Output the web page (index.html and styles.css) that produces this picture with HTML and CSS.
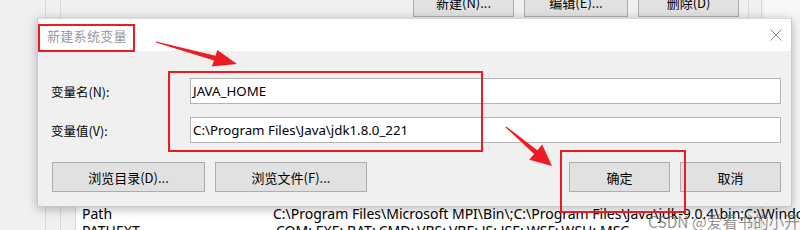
FILE: index.html
```html
<!DOCTYPE html>
<html lang="zh-CN">
<head>
<meta charset="utf-8">
<title>新建系统变量</title>
<link rel="stylesheet" href="styles.css">
</head>
<body>
<div class="screen">
  <div class="backwin">
    <div class="pane">
      <div class="toolbar">
        <div class="tbtn w1">新建(N)...</div>
        <div class="tbtn w2">编辑(E)...</div>
        <div class="tbtn w3">删除(D)</div>
      </div>
      <div class="list">
        <div class="lrow"><span class="lname">Path</span><span class="lval">C:\Program Files\Microsoft MPI\Bin\;C:\Program Files\Java\jdk-9.0.4\bin;C:\Windows</span></div>
        <div class="lrow"><span class="lname">PATHEXT</span><span class="lval">.COM;.EXE;.BAT;.CMD;.VBS;.VBE;.JS;.JSE;.WSF;.WSH;.MSC</span></div>
      </div>
    </div>
  </div>

  <div class="dialog">
    <div class="titlebar">
      <span class="title">新建系统变量</span>
      <svg class="close" width="12" height="12" viewBox="0 0 12 12"><path d="M0.5 0.5 L11.5 11.5 M11.5 0.5 L0.5 11.5" stroke="#8c8c8c" stroke-width="1" fill="none"/></svg>
    </div>
    <div class="body">
      <div class="field">
        <label class="flabel">变量名(N):</label>
        <div class="input">JAVA_HOME</div>
      </div>
      <div class="field">
        <label class="flabel">变量值(V):</label>
        <div class="input">C:\Program Files\Java\jdk1.8.0_221</div>
      </div>
      <div class="buttons">
        <div class="btn wide1">浏览目录(D)...</div>
        <div class="btn wide2">浏览文件(F)...</div>
        <div class="spacer"></div>
        <div class="btn">确定</div>
        <div class="btn">取消</div>
      </div>
    </div>
  </div>

  <div class="watermark">CSDN @爱看书的小开始</div>

  <div class="redbox rb1"></div>
  <div class="redbox rb2"></div>
  <div class="redbox rb3"></div>
  <svg class="arrows" width="800" height="230" viewBox="0 0 800 230">
    <polygon fill="#ed1c24" points="155.9,42.6 214.1,60.6 211.7,66.4 237,64 217.4,50 215.5,55.8 156.1,41.4"/>
    <polygon fill="#ed1c24" points="505.6,127.4 534.1,154 529.2,159.8 552,166 542.2,144.4 537.3,150.2 506.4,126.6"/>
  </svg>
</div>
</body>
</html>
```
FILE: styles.css
```css
html, body {
  margin: 0;
  padding: 0;
}
body {
  background: #f0f0f0;
  font-family: "Noto Sans", "Noto Sans CJK SC", sans-serif;
  color: #000;
}
.screen {
  position: relative;
  width: 800px;
  height: 230px;
  overflow: hidden;
  background: linear-gradient(to right, #f0f0f0 0, #f0f0f0 764px, #f7f7f7 764px);
}
.backwin {
  margin-left: 45px;
  width: 717px;
  height: 230px;
  border-left: 1px solid #dadada;
  border-right: 1px solid #dadada;
  box-sizing: border-box;
}
.pane {
  margin-left: 14px;
  width: 689px;
  height: 230px;
  border-left: 1px solid #dadada;
  border-right: 1px solid #dadada;
  box-sizing: border-box;
  display: flex;
  flex-direction: column;
}
.toolbar {
  display: flex;
  margin-top: -13px;
  padding-left: 352px;
  gap: 10px;
}
.tbtn {
  height: 30px;
  box-sizing: border-box;
  border: 1px solid #adadad;
  background: #e1e1e1;
  font-size: 13px;
  display: flex;
  align-items: center;
  justify-content: center;
  font-family: "Noto Sans CJK SC", sans-serif;
}
.w1 { width: 101px; }
.w2 { width: 104px; }
.w3 { width: 101px; }
.list {
  margin-top: 185px;
  margin-left: 14px;
  background: #fff;
  flex: 1;
  padding-top: 3px;
  border-left: 1px solid #dadada;
}
.lrow {
  display: flex;
  height: 17px;
  line-height: 17px;
  font-size: 14px;
  white-space: nowrap;
}
.lname {
  width: 197px;
  padding-left: 6px;
  box-sizing: border-box;
  flex: none;
}
.lval {
  flex: none;
}

.dialog {
  position: absolute;
  left: 37px;
  top: 18px;
  width: 755px;
  height: 189px;
  background: #f0f0f0;
  box-shadow: 0 2px 10px rgba(0, 0, 0, 0.28);
  border: 1px solid #c8c8c8;
  border-top-color: #d8d8d8;
  box-sizing: border-box;
  display: flex;
  flex-direction: column;
}
.titlebar {
  height: 32px;
  background: #fff;
  display: flex;
  align-items: center;
  justify-content: space-between;
  padding: 0 9px 0 9px;
  flex: none;
}
.title {
  font-family: "Noto Sans CJK SC", sans-serif;
  font-size: 13px;
  color: #999;
  letter-spacing: 0.3px;
}
.body {
  padding: 27px 10px 0 13px;
  display: flex;
  flex-direction: column;
}
.field {
  display: flex;
  align-items: center;
  height: 26px;
  margin-bottom: 13px;
}
.flabel {
  width: 139px;
  flex: none;
  font-size: 12.5px;
  font-family: "Noto Sans CJK SC", sans-serif;
}
.input {
  flex: 1;
  height: 26px;
  box-sizing: border-box;
  border: 1px solid #b4b4b4;
  background: #fff;
  font-size: 13.3px;
  line-height: 24px;
  padding-left: 2px;
  white-space: nowrap;
}
.buttons {
  display: flex;
  gap: 10px;
  margin-top: 6px;
  padding-left: 1px;
}
.btn {
  width: 101px;
  height: 30px;
  box-sizing: border-box;
  border: 1px solid #adadad;
  background: #e1e1e1;
  font-size: 13px;
  font-family: "Noto Sans CJK SC", sans-serif;
  display: flex;
  align-items: center;
  justify-content: center;
}
.wide1 { width: 153px; }
.wide2 { width: 152px; }
.spacer { flex: 1; }

.watermark {
  position: absolute;
  left: 648px;
  top: 210px;
  font-size: 15.5px;
  font-family: "Noto Sans CJK SC", sans-serif;
  color: rgba(110, 110, 110, 0.75);
  white-space: nowrap;
}
.redbox {
  position: absolute;
  border: 2px solid #ed1c24;
  box-sizing: border-box;
}
.rb1 { left: 38px; top: 24px; width: 97px; height: 28px; }
.rb2 { left: 168px; top: 71px; width: 315px; height: 81px; }
.rb3 { left: 560px; top: 150px; width: 126px; height: 63px; }
.arrows {
  position: absolute;
  left: 0;
  top: 0;
}
```
